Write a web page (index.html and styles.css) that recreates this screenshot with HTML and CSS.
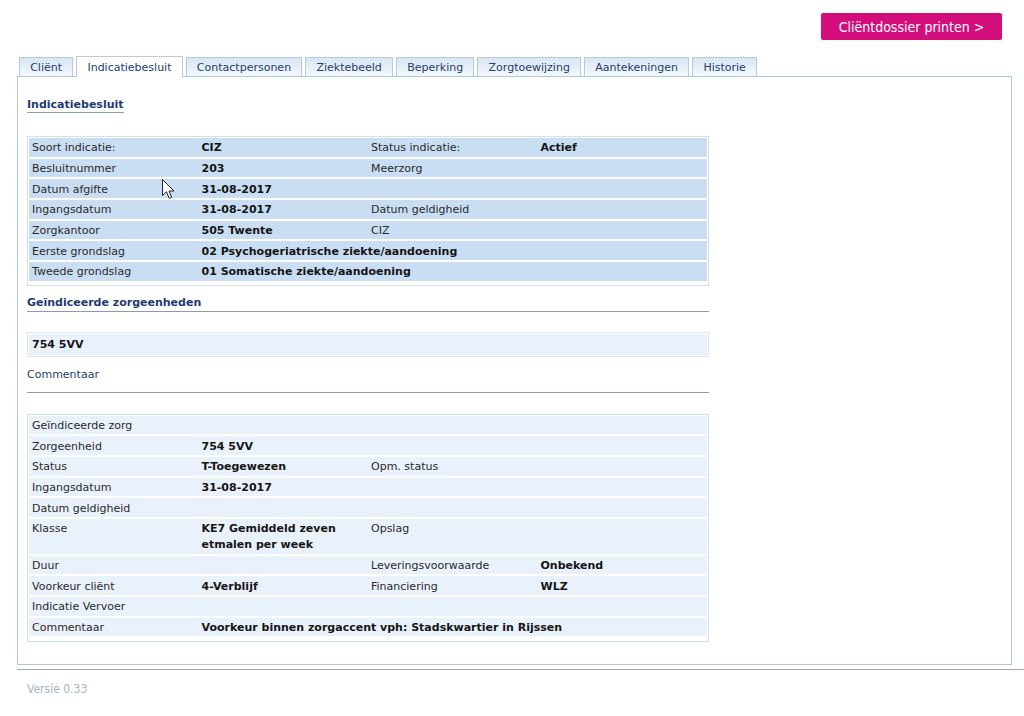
FILE: index.html
```html
<!DOCTYPE html>
<html lang="nl">
<head>
<meta charset="utf-8">
<title>Indicatiebesluit</title>
<link rel="stylesheet" href="styles.css">
</head>
<body>
<div class="page">
  <div class="topbar">
    <a class="print-btn" href="#">Cliëntdossier printen &gt;</a>
  </div>

  <ul class="tabs">
    <li class="tab">Cliënt</li>
    <li class="tab active">Indicatiebesluit</li>
    <li class="tab">Contactpersonen</li>
    <li class="tab">Ziektebeeld</li>
    <li class="tab">Beperking</li>
    <li class="tab">Zorgtoewijzing</li>
    <li class="tab">Aantekeningen</li>
    <li class="tab">Historie</li>
  </ul>

  <div class="panel">
    <h2 class="section-title">Indicatiebesluit</h2>

    <table class="data strong">
      <tr><td>Soort indicatie:</td><td class="v">CIZ</td><td>Status indicatie:</td><td class="v">Actief</td></tr>
      <tr><td>Besluitnummer</td><td class="v">203</td><td>Meerzorg</td><td></td></tr>
      <tr><td>Datum afgifte</td><td class="v">31-08-2017</td><td></td><td></td></tr>
      <tr><td>Ingangsdatum</td><td class="v">31-08-2017</td><td>Datum geldigheid</td><td></td></tr>
      <tr><td>Zorgkantoor</td><td class="v">505 Twente</td><td>CIZ</td><td></td></tr>
      <tr><td>Eerste grondslag</td><td class="v" colspan="3">02 Psychogeriatrische ziekte/aandoening</td></tr>
      <tr><td>Tweede grondslag</td><td class="v" colspan="3">01 Somatische ziekte/aandoening</td></tr>
    </table>

    <h3 class="subhead">Geïndiceerde zorgeenheden</h3>

    <div class="unit-box"><div class="unit-inner">754 5VV</div></div>

    <div class="comment-head">Commentaar</div>

    <table class="data light">
      <tr><td colspan="4">Geïndiceerde zorg</td></tr>
      <tr><td>Zorgeenheid</td><td class="v">754 5VV</td><td></td><td></td></tr>
      <tr><td>Status</td><td class="v">T-Toegewezen</td><td>Opm. status</td><td></td></tr>
      <tr><td>Ingangsdatum</td><td class="v">31-08-2017</td><td></td><td></td></tr>
      <tr><td>Datum geldigheid</td><td></td><td></td><td></td></tr>
      <tr><td>Klasse</td><td class="v">KE7 Gemiddeld zeven etmalen per week</td><td>Opslag</td><td></td></tr>
      <tr><td>Duur</td><td></td><td>Leveringsvoorwaarde</td><td class="v">Onbekend</td></tr>
      <tr><td>Voorkeur cliënt</td><td class="v">4-Verblijf</td><td>Financiering</td><td class="v">WLZ</td></tr>
      <tr><td>Indicatie Vervoer</td><td></td><td></td><td></td></tr>
      <tr><td>Commentaar</td><td class="v" colspan="3">Voorkeur binnen zorgaccent vph: Stadskwartier in Rijssen</td></tr>
    </table>
  </div>

  <div class="footer">Versie 0.33</div>
</div>

<svg class="cursor" width="13" height="21" viewBox="0 0 13 21" aria-hidden="true">
  <path d="M0.5 0.5 L0.5 16.5 L4.5 12.8 L7.2 19.3 L9.6 18.3 L7 12 L12 12 Z" fill="#fff" stroke="#222" stroke-width="1" stroke-linejoin="round"/>
</svg>
</body>
</html>
```

FILE: styles.css
```css
html, body {
  margin: 0;
  padding: 0;
  background: #ffffff;
}

body {
  font-family: "DejaVu Sans", Verdana, sans-serif;
  font-size: 11px;
  color: #222222;
  position: relative;
}

.page {
  padding-left: 17px;
}

/* top bar with print button */
.topbar {
  display: flex;
  justify-content: flex-end;
  padding-top: 13px;
  padding-right: 22px;
  margin-bottom: 16px;
}

.print-btn {
  display: flex;
  align-items: center;
  justify-content: center;
  width: 181px;
  height: 27px;
  background: #d30e7c;
  color: #ffffff;
  border-radius: 2px;
  text-decoration: none;
  font-family: "DejaVu Sans Condensed", "DejaVu Sans", sans-serif;
  font-size: 14px;
}

/* tabs */
.tabs {
  list-style: none;
  margin: 0 0 -1px 0;
  padding: 0 0 0 2px;
  display: flex;
  align-items: flex-end;
  gap: 3px;
  height: 21px;
  position: relative;
  z-index: 1;
}

.tab {
  height: 18px;
  line-height: 20px;
  padding: 0 10.2px;
  margin-bottom: 1px;
  border: 1px solid #b6cbe2;
  border-bottom: none;
  background: linear-gradient(#d8e5f3, #f4f8fc);
  color: #23406f;
  white-space: nowrap;
  overflow: hidden;
}

.tab.active {
  height: 20px;
  line-height: 22px;
  margin-bottom: 0;
  background: #ffffff;
}

/* main panel */
.panel {
  margin-right: 12px;
  border: 1px solid #abc9e0;
  padding: 21px 9px 22px;
  background: #ffffff;
}

.section-title {
  display: inline-block;
  margin: 0;
  font-size: 11px;
  line-height: 14px;
  font-weight: bold;
  color: #1e3b72;
  padding-bottom: 0;
  border-bottom: 1px solid #8e9bb5;
}

.data {
  width: 682px;
  box-sizing: border-box;
  table-layout: fixed;
  border-collapse: separate;
  border-spacing: 0;
  border: 1px solid #d2e0ee;
  padding: 1px 1px 4px;
  margin-top: 23px;
}

.data td {
  padding: 2.33px 3px 0.33px;
  line-height: 16px;
  vertical-align: top;
  border-top: 2px solid #ffffff;
  color: #2a2a2a;
}

.data tr:first-child td {
  border-top: none;
}

.data td.v {
  font-weight: bold;
  color: #151515;
}

.data.strong td {
  background: #cadef3;
}

.data.light td {
  background: #e9f1fa;
}

.data.light {
  margin-top: 21px;
  padding-bottom: 5px;
}

.subhead {
  width: 682px;
  box-sizing: border-box;
  margin: 10px 0 0;
  font-size: 11px;
  line-height: 14px;
  font-weight: bold;
  color: #1e3b72;
  padding-bottom: 1px;
  border-bottom: 1px solid #8c9ab2;
}

.unit-box {
  width: 682px;
  box-sizing: border-box;
  margin-top: 20px;
  border: 1px solid #dde7f2;
  padding: 1px;
}

.unit-inner {
  background: #e9f1fa;
  height: 21px;
  line-height: 22px;
  padding-left: 3px;
  font-weight: bold;
  color: #151515;
}

.comment-head {
  width: 682px;
  box-sizing: border-box;
  margin-top: 11px;
  line-height: 14px;
  color: #23406f;
  padding-bottom: 10px;
  border-bottom: 1px solid #8c9ab2;
}

/* footer */
.footer {
  margin-top: 4px;
  border-top: 1px solid #a6a8b0;
  padding: 12px 10px 20px;
  line-height: 14px;
  font-family: "DejaVu Sans Condensed", "DejaVu Sans", sans-serif;
  font-size: 12px;
  color: #a9b3c6;
}

/* mouse pointer captured in the screenshot */
.cursor {
  position: absolute;
  left: 162px;
  top: 179px;
}
```
